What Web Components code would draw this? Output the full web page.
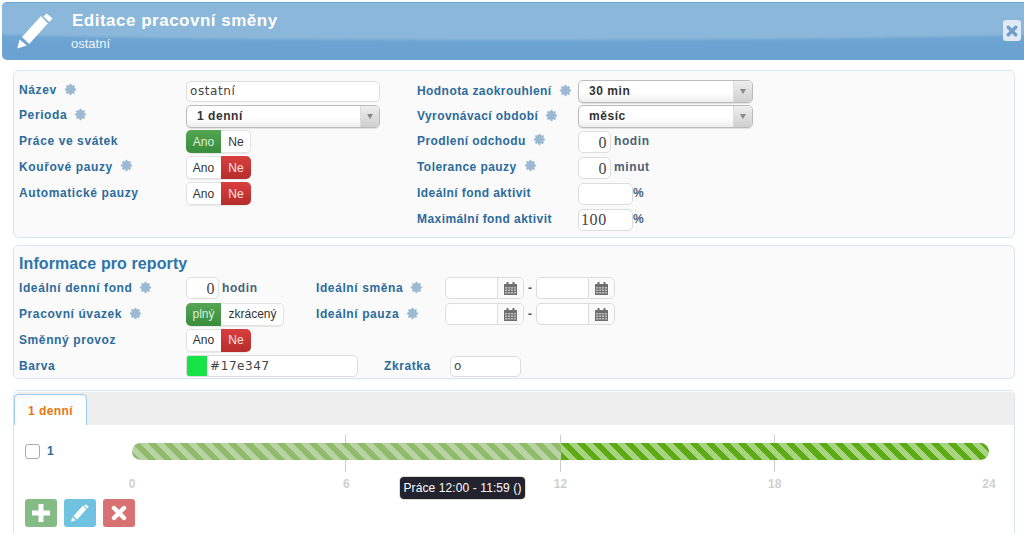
<!DOCTYPE html>
<html lang="cs">
<head>
<meta charset="utf-8">
<title>Editace pracovní směny</title>
<style>
html,body{margin:0;height:533px;overflow:hidden;background:#fff;font-family:"Liberation Sans",Arial,sans-serif;font-size:12px}
.col{display:block}
.row{display:flex}
</style>
</head>
<body>
<shift-header title-text="Editace pracovní směny" sub="ostatní"></shift-header>

<form-panel style="margin-top:10px;height:168px;--pad-top:7.5px;--label-shift:2px">
  <div class="row">
    <div class="col" style="width:398px">
      <field-row label="Název" required style="--row-h:25px"><text-box width="194">ostatní</text-box></field-row>
      <field-row label="Perioda" required style="--row-h:25px"><select-box width="194">1 denní</select-box></field-row>
      <field-row label="Práce ve svátek"><yes-no a="Ano" b="Ne" on="a" awidth="35" bwidth="30"></yes-no></field-row>
      <field-row label="Kouřové pauzy" required><yes-no a="Ano" b="Ne" on="b" awidth="35" bwidth="30"></yes-no></field-row>
      <field-row label="Automatické pauzy"><yes-no a="Ano" b="Ne" on="b" awidth="35" bwidth="30"></yes-no></field-row>
    </div>
    <div class="col" style="--label-w:161px;--label-sp:.43px">
      <field-row label="Hodnota zaokrouhlení" required style="--row-h:25px;--label-shift:0px"><select-box width="175">30 min</select-box></field-row>
      <field-row label="Vyrovnávací období" required style="--row-h:25px;--label-shift:0px"><select-box width="175">měsíc</select-box></field-row>
      <field-row label="Prodlení odchodu" required><num-box width="33">0</num-box><unit-text>hodin</unit-text></field-row>
      <field-row label="Tolerance pauzy" required><num-box width="33">0</num-box><unit-text>minut</unit-text></field-row>
      <field-row label="Ideální fond aktivit"><num-box width="55"></num-box><unit-text tight>%</unit-text></field-row>
      <field-row label="Maximální fond aktivit"><num-box width="55" left>100</num-box><unit-text tight>%</unit-text></field-row>
    </div>
  </div>
</form-panel>

<form-panel style="margin-top:7px;height:134px;--pad-top:6px;--label-shift:0px">
  <panel-title>Informace pro reporty</panel-title>
  <div class="row">
    <field-row label="Ideální denní fond" required style="width:297px"><num-box width="33">0</num-box><unit-text>hodin</unit-text></field-row>
    <field-row label="Ideální směna" required style="--label-w:129px"><date-box></date-box><dash-mark></dash-mark><date-box></date-box></field-row>
  </div>
  <div class="row">
    <field-row label="Pracovní úvazek" required style="width:297px"><yes-no a="plný" b="zkrácený" on="a" awidth="35" bwidth="63"></yes-no></field-row>
    <field-row label="Ideální pauza" required style="--label-w:129px"><date-box></date-box><dash-mark></dash-mark><date-box></date-box></field-row>
  </div>
  <field-row label="Směnný provoz"><yes-no a="Ano" b="Ne" on="b" awidth="35" bwidth="30"></yes-no></field-row>
  <div class="row">
    <field-row label="Barva" style="width:365px"><color-box color="#17e347" width="172"></color-box></field-row>
    <field-row label="Zkratka" style="--label-w:66px"><text-box width="71">o</text-box></field-row>
  </div>
</form-panel>

<tab-panel tab="1 denní" style="margin-top:11px">
  <shift-timeline row="1" tip="Práce 12:00 - 11:59 ()"></shift-timeline>
  <action-bar></action-bar>
</tab-panel>

<script>
const PENCIL = (s) => `<svg width="${s}" height="${s}" viewBox="0 0 36 36" fill="#fff"><path d="M26.5 3.6 29.6.5 35.6 5.5 32.3 9Z"/><path d="M24 3 30.8 10.6 12.2 31 5 24Z"/><path d="M.3 35.5 2.6 26.5 9.8 32.6Z"/></svg>`;
const CROSS = (s, c) => `<svg width="${s}" height="${s}" viewBox="0 0 16 16"><path d="M3 3 13 13M13 3 3 13" stroke="${c}" stroke-width="4.4" stroke-linecap="round" fill="none"/></svg>`;
const PLUS = (s) => `<svg width="${s}" height="${s}" viewBox="0 0 16 16" fill="#fff"><path d="M5.8 0h4.4v5.8H16v4.4h-5.8V16H5.8v-5.8H0V5.8h5.8Z"/></svg>`;
const STAR = `<svg width="13" height="13" viewBox="0 0 13 13" fill="#9bb9d2"><circle cx="6.5" cy="6.5" r="4.4"/><g stroke="#9bb9d2" stroke-width="2.200" stroke-linecap="round"><path d="M6.500 1.800v9.400M1.800 6.500h9.400M3.200 3.200l6.600 6.600M9.800 3.200l-6.600 6.600"/></g></svg>`;
const CAL = `<svg width="13" height="13" viewBox="0 0 13 13"><path fill="#6f6f6f" d="M0 2h13v11H0Z"/><path fill="#6f6f6f" d="M2.500 0h2v3h-2ZM8.500 0h2v3h-2Z"/><path fill="#bbb" d="M1 5h2.300v1.600H1ZM4.100 5h2.200v1.600H4.100ZM7 5h2.200v1.600H7ZM10 5h2v1.600h-2ZM1 7.500h2.300v1.600H1ZM4.100 7.500h2.200v1.600H4.100ZM7 7.500h2.200v1.600H7ZM10 7.500h2v1.600h-2ZM1 10h2.300v1.600H1ZM4.100 10h2.200v1.600H4.100ZM7 10h2.200v1.600H7ZM10 10h2v1.600h-2Z"/></svg>`;
const FIELD_FONT = `"DejaVu Sans",Verdana,sans-serif`;

class ShiftHeader extends HTMLElement {
    connectedCallback(){
        const root = this.attachShadow({mode: "open"});
        root.innerHTML = `
        <style>
        :host { display:flex; align-items:center; box-sizing:border-box; height:58px; margin:2px 0 0 2px; padding-left:15px; position:relative;
            background:linear-gradient(#7dafd8,#6aa3d2 75%); border-top:1px solid #62a6de; border-radius:5px 0 0 5px; overflow:hidden; color:#fff; }
        .shine { position:absolute; left:-5%; right:-5%; top:-40px; height:77px; background:#8ab7da; border-radius:0 0 50% 50%/0 0 9px 9px; filter:blur(1px); }
        .icon, .text, .close { position:relative; z-index:1; }
        .icon { width:36px; height:36px; margin-right:19px; margin-top:-1px; }
        .text { display:flex; flex-direction:column; margin-top:-1px; }
        .title { font-size:17px; font-weight:bold; letter-spacing:.5px; line-height:20px; }
        .sub { font-size:13px; line-height:16px; margin-top:5px; color:#eef5fb; margin-left:-1px; }
        .close { margin-left:auto; margin-right:3px; margin-top:-2px; width:18px; height:21px; background:#dfeaf5; border-radius:3px; display:flex; align-items:center; justify-content:center; }
        </style>
        <div class="shine"></div>
        <div class="icon">${PENCIL(36)}</div>
        <div class="text"><div class="title">${this.getAttribute("title-text")}</div><div class="sub">${this.getAttribute("sub")}</div></div>
        <div class="close">${CROSS(12, "#6f9fc8")}</div>`;
    }
}
customElements.define("shift-header", ShiftHeader);

class FormPanel extends HTMLElement {
    constructor(){
        super();
        this.attachShadow({mode: "open"}).innerHTML = `
        <style>
        :host { display:block; box-sizing:border-box; margin-left:13px; width:1002px; padding:var(--pad-top,8px) 5px 0; background:#fafafa; border:1px solid #d5e5f3; border-radius:6px; }
        </style><slot></slot>`;
    }
}
customElements.define("form-panel", FormPanel);

class PanelTitle extends HTMLElement {
    constructor(){
        super();
        this.attachShadow({mode: "open"}).innerHTML = `
        <style>:host { display:block; height:23px; line-height:23px; font-size:16px; font-weight:bold; letter-spacing:.1px; color:#2e74a8; }</style><slot></slot>`;
    }
}
customElements.define("panel-title", PanelTitle);

class FieldRow extends HTMLElement {
    connectedCallback(){
        const root = this.attachShadow({mode: "open"});
        root.innerHTML = `
        <style>
        :host { display:flex; align-items:center; box-sizing:border-box; height:var(--row-h,26px); }
        .label { display:flex; align-items:center; flex:none; width:var(--label-w,167px); margin-bottom:var(--label-shift,0px); font-size:12px; font-weight:bold; color:#2c6b9c; letter-spacing:var(--label-sp,.6px); white-space:nowrap; }
        .star { display:inline-flex; margin-left:7px; margin-top:-2px; }
        .ctl { display:flex; align-items:center; }
        </style>
        <div class="label"><span>${this.getAttribute("label")}</span>${this.hasAttribute("required") ? `<span class="star">${STAR}</span>` : ""}</div>
        <div class="ctl"><slot></slot></div>`;
    }
}
customElements.define("field-row", FieldRow);

class TextBox extends HTMLElement {
    connectedCallback(){
        const root = this.attachShadow({mode: "open"});
        root.innerHTML = `
        <style>
        :host { display:flex; align-items:center; box-sizing:border-box; height:21px; width:${this.getAttribute("width")}px; padding:0 3px; background:#fff; border:1px solid #ddd; border-radius:5px; font:12px/1 ${FIELD_FONT}; letter-spacing:.6px; color:#444; }
        </style><slot></slot>`;
    }
}
customElements.define("text-box", TextBox);

class NumBox extends HTMLElement {
    connectedCallback(){
        const root = this.attachShadow({mode: "open"});
        const left = this.hasAttribute("left");
        root.innerHTML = `
        <style>
        :host { display:flex; align-items:center; justify-content:${left ? "flex-start" : "flex-end"}; box-sizing:border-box; height:22px; width:${this.getAttribute("width")}px; padding:${left ? "1px 0 0 2px" : "2px 3px 0 0"}; background:#fff; border:1px solid #ddd; border-radius:5px; font:16px/1 "Liberation Serif",serif; letter-spacing:.6px; color:#444; }
        </style><slot></slot>`;
    }
}
customElements.define("num-box", NumBox);

class UnitText extends HTMLElement {
    connectedCallback(){
        const root = this.attachShadow({mode: "open"});
        root.innerHTML = `
        <style>:host { display:block; margin-left:${this.hasAttribute("tight") ? 0 : 3}px; margin-bottom:var(--label-shift,0px); font-size:12px; font-weight:bold; color:#4a6175; letter-spacing:.6px; }</style><slot></slot>`;
    }
}
customElements.define("unit-text", UnitText);

class SelectBox extends HTMLElement {
    connectedCallback(){
        const root = this.attachShadow({mode: "open"});
        root.innerHTML = `
        <style>
        :host { display:flex; box-sizing:border-box; height:23px; width:${this.getAttribute("width")}px; background:linear-gradient(#fff 55%,#eee); border:1px solid #bbb; border-radius:5px; overflow:hidden; box-shadow:0 1px 1px rgba(0,0,0,.1); }
        .val { flex:1; display:flex; align-items:center; padding-left:10px; font-size:12px; font-weight:bold; letter-spacing:.55px; color:#333; }
        .arrow { flex:none; width:18px; display:flex; align-items:center; justify-content:center; background:linear-gradient(#eee,#cfcfcf); border-left:1px solid #ddd; }
        .arrow i { width:0; height:0; border:3.5px solid transparent; border-top:5px solid #888; border-bottom:0; }
        </style>
        <div class="val"><slot></slot></div><div class="arrow"><i></i></div>`;
    }
}
customElements.define("select-box", SelectBox);

class YesNo extends HTMLElement {
    connectedCallback(){
        const root = this.attachShadow({mode: "open"});
        const on = this.getAttribute("on");
        const seg = (k) => {
            const cls = on === k ? (k === "a" ? "green" : "red") : "";
            return `<div class="seg ${cls}" style="width:${this.getAttribute(k + "width")}px">${this.getAttribute(k)}</div>`;
        };
        root.innerHTML = `
        <style>
        :host { display:inline-flex; box-sizing:border-box; height:23px; border-radius:5px; overflow:hidden; background:#fff; box-shadow:0 0 0 1px #e2e2e2 inset, 0 1px 1px rgba(0,0,0,.08); }
        .seg { display:flex; align-items:center; justify-content:center; box-sizing:border-box; font-size:12px; color:#333; }
        .green { background:linear-gradient(#54a554,#3a8d3c); color:#d9efd9; }
        .red { background:linear-gradient(#d93f3f,#b62c2c); color:#fbe4e4; }
        </style>${seg("a")}${seg("b")}`;
    }
}
customElements.define("yes-no", YesNo);

class DateBox extends HTMLElement {
    constructor(){
        super();
        this.attachShadow({mode: "open"}).innerHTML = `
        <style>
        :host { display:flex; box-sizing:border-box; width:79px; height:22px; background:#fff; border:1px solid #ddd; border-radius:5px; overflow:hidden; }
        .in { width:51px; }
        .btn { flex:1; display:flex; align-items:center; justify-content:center; border-left:1px solid #ddd; background:#fafafa; }
        </style><div class="in"></div><div class="btn">${CAL}</div>`;
    }
}
customElements.define("date-box", DateBox);

class DashMark extends HTMLElement {
    constructor(){
        super();
        this.attachShadow({mode: "open"}).innerHTML = `
        <style>:host { display:block; width:12px; text-align:center; font-size:12px; font-weight:bold; color:#555; }</style>-`;
    }
}
customElements.define("dash-mark", DashMark);

class ColorBox extends HTMLElement {
    connectedCallback(){
        const root = this.attachShadow({mode: "open"});
        const c = this.getAttribute("color");
        root.innerHTML = `
        <style>
        :host { display:flex; box-sizing:border-box; width:${this.getAttribute("width")}px; height:22px; background:#fff; border:1px solid #ddd; border-radius:3px 5px 5px 3px; overflow:hidden; }
        .sw { width:20px; background:${c}; }
        .v { display:flex; align-items:center; padding-left:3px; font:12px/1 ${FIELD_FONT}; letter-spacing:.6px; color:#444; }
        </style><div class="sw"></div><div class="v">${c}</div>`;
    }
}
customElements.define("color-box", ColorBox);

class TabPanel extends HTMLElement {
    connectedCallback(){
        const root = this.attachShadow({mode: "open"});
        root.innerHTML = `
        <style>
        :host { display:block; box-sizing:border-box; margin-left:13px; width:1002px; height:160px; background:#fff; border:1px solid #d5e5f3; border-radius:6px; padding:1px 0 0; }
        .bar { display:flex; align-items:flex-end; height:33px; background:#eee; border-radius:5px 5px 0 0; }
        .tab { display:flex; align-items:center; justify-content:center; box-sizing:border-box; width:73px; height:31px; margin-left:0; padding-top:1px; background:linear-gradient(#fbfdff,#fff); border:1px solid #9ccbee; border-bottom:0; border-radius:5px 5px 0 0; font-size:12px; font-weight:bold; letter-spacing:.4px; color:#e8760f; }
        </style>
        <div class="bar"><div class="tab">${this.getAttribute("tab")}</div></div>
        <slot></slot>`;
    }
}
customElements.define("tab-panel", TabPanel);

class ShiftTimeline extends HTMLElement {
    connectedCallback(){
        const root = this.attachShadow({mode: "open"});
        const marks = [0, 6, 12, 18, 24];
        root.innerHTML = `
        <style>
        :host { display:flex; height:74px; padding-left:11px; }
        .head { display:flex; align-items:center; align-self:flex-start; width:107px; height:17px; margin-top:18px; }
        .cb { box-sizing:border-box; width:15px; height:15px; background:#fff; border:1px solid #aaa; border-radius:3px; }
        .num { margin-left:7px; margin-top:-2px; font-size:12px; font-weight:bold; color:#2c6b9c; }
        .axis { position:relative; width:857px; }
        .bar { position:absolute; left:0; right:0; top:18px; height:17px; border-radius:9px; overflow:hidden; display:flex; }
        .seg { width:50%; }
        .s1 { background:repeating-linear-gradient(45deg,#8fbc6a 0 5.700px,#b9d4a4 5.700px 11.400px); }
        .s2 { background:repeating-linear-gradient(45deg,#5dab14 0 5.700px,#a9d583 5.700px 11.400px); }
        .tick { position:absolute; top:10px; width:1px; height:37px; margin-left:-1px; background:#ccc; }
        .lab { position:absolute; top:52px; transform:translateX(-50%); font-size:12px; font-weight:bold; color:#cfcfcf; }
        .tip { position:absolute; left:268px; top:52px; box-sizing:border-box; width:125px; height:22px; display:flex; align-items:center; justify-content:center; white-space:nowrap; background:#23232f; border-radius:4px; box-shadow:0 0 0 1px #ddd; font-size:12px; letter-spacing:.1px; color:#fff; z-index:2; }
        </style>
        <div class="head"><div class="cb"></div><div class="num">${this.getAttribute("row")}</div></div>
        <div class="axis">
            ${[6, 12, 18].map(m => `<div class="tick" style="left:${m / 24 * 100}%"></div>`).join("")}
            <div class="bar"><div class="seg s1"></div><div class="seg s2"></div></div>
            ${marks.map(m => `<div class="lab" style="left:${m / 24 * 100}%">${m}</div>`).join("")}
            <div class="tip">${this.getAttribute("tip")}</div>
        </div>`;
    }
}
customElements.define("shift-timeline", ShiftTimeline);

class ActionBar extends HTMLElement {
    constructor(){
        super();
        this.attachShadow({mode: "open"}).innerHTML = `
        <style>
        :host { display:flex; gap:7px; padding-left:11px; }
        .b { display:flex; align-items:center; justify-content:center; width:32px; height:28px; border-radius:3px; }
        .g { background:#85bb85; } .l { background:#6fc3e0; } .r { background:#d87272; }
        </style>
        <div class="b g">${PLUS(18)}</div><div class="b l">${PENCIL(18)}</div><div class="b r">${CROSS(16, "#fff")}</div>`;
    }
}
customElements.define("action-bar", ActionBar);
</script>
</body>
</html>
